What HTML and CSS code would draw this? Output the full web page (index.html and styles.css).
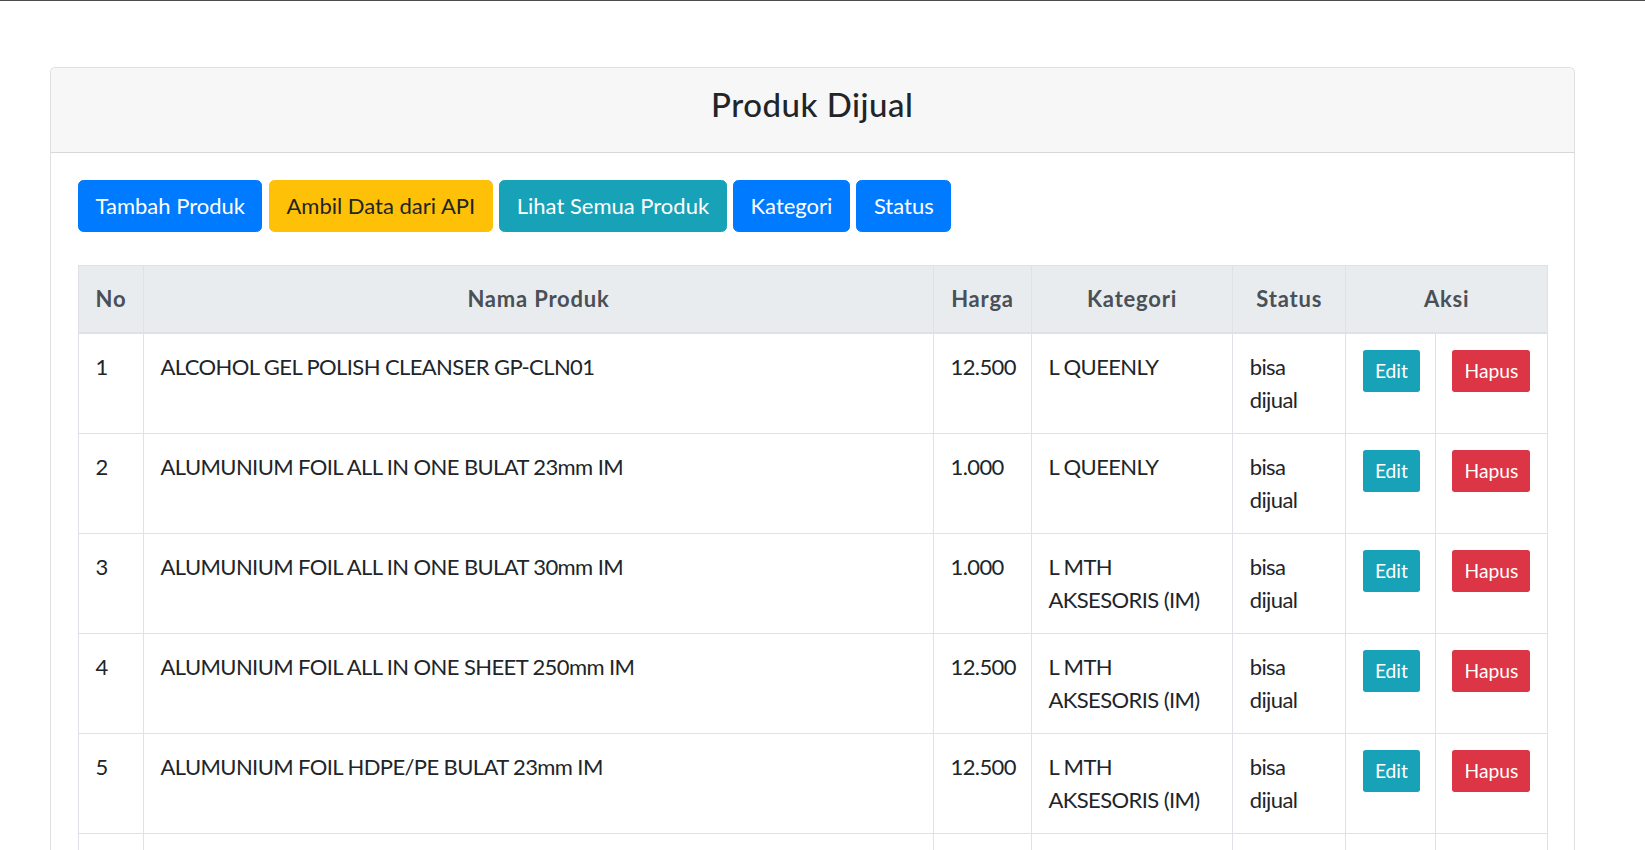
FILE: index.html
```html
<!DOCTYPE html>
<html lang="id">
<head>
<meta charset="utf-8">
<title>Produk Dijual</title>
<link rel="stylesheet" href="styles.css">
</head>
<body>
<div class="topline"></div>
<div class="page">
  <div class="card">
    <div class="card-header">
      <h4 class="title">Produk Dijual</h4>
    </div>
    <div class="card-body">
      <div class="toolbar">
        <a class="btn btn-primary" href="#">Tambah Produk</a>
        <a class="btn btn-warning" href="#">Ambil Data dari API</a>
        <a class="btn btn-info" href="#">Lihat Semua Produk</a>
        <a class="btn btn-primary" href="#">Kategori</a>
        <a class="btn btn-primary" href="#">Status</a>
      </div>
      <table class="table">
        <colgroup>
          <col class="c-no">
          <col class="c-nama">
          <col class="c-harga">
          <col class="c-kat">
          <col class="c-status">
          <col class="c-edit">
          <col class="c-hapus">
        </colgroup>
        <thead>
          <tr>
            <th>No</th>
            <th>Nama Produk</th>
            <th>Harga</th>
            <th>Kategori</th>
            <th>Status</th>
            <th colspan="2">Aksi</th>
          </tr>
        </thead>
        <tbody>
          <tr>
            <td>1</td>
            <td>ALCOHOL GEL POLISH CLEANSER GP-CLN01</td>
            <td>12.500</td>
            <td>L QUEENLY</td>
            <td>bisa dijual</td>
            <td><a class="btn-sm btn-info" href="#">Edit</a></td>
            <td><a class="btn-sm btn-danger" href="#">Hapus</a></td>
          </tr>
          <tr>
            <td>2</td>
            <td>ALUMUNIUM FOIL ALL IN ONE BULAT 23mm IM</td>
            <td>1.000</td>
            <td>L QUEENLY</td>
            <td>bisa dijual</td>
            <td><a class="btn-sm btn-info" href="#">Edit</a></td>
            <td><a class="btn-sm btn-danger" href="#">Hapus</a></td>
          </tr>
          <tr>
            <td>3</td>
            <td>ALUMUNIUM FOIL ALL IN ONE BULAT 30mm IM</td>
            <td>1.000</td>
            <td>L MTH AKSESORIS (IM)</td>
            <td>bisa dijual</td>
            <td><a class="btn-sm btn-info" href="#">Edit</a></td>
            <td><a class="btn-sm btn-danger" href="#">Hapus</a></td>
          </tr>
          <tr>
            <td>4</td>
            <td>ALUMUNIUM FOIL ALL IN ONE SHEET 250mm IM</td>
            <td>12.500</td>
            <td>L MTH AKSESORIS (IM)</td>
            <td>bisa dijual</td>
            <td><a class="btn-sm btn-info" href="#">Edit</a></td>
            <td><a class="btn-sm btn-danger" href="#">Hapus</a></td>
          </tr>
          <tr>
            <td>5</td>
            <td>ALUMUNIUM FOIL HDPE/PE BULAT 23mm IM</td>
            <td>12.500</td>
            <td>L MTH AKSESORIS (IM)</td>
            <td>bisa dijual</td>
            <td><a class="btn-sm btn-info" href="#">Edit</a></td>
            <td><a class="btn-sm btn-danger" href="#">Hapus</a></td>
          </tr>
          <tr>
            <td>6</td>
            <td>ALUMUNIUM FOIL HDPE/PE BULAT 30mm IM</td>
            <td>12.500</td>
            <td>L MTH AKSESORIS (IM)</td>
            <td>bisa dijual</td>
            <td><a class="btn-sm btn-info" href="#">Edit</a></td>
            <td><a class="btn-sm btn-danger" href="#">Hapus</a></td>
          </tr>
        </tbody>
      </table>
    </div>
  </div>
</div>
</body>
</html>
```

FILE: styles.css
```css
* {
  box-sizing: border-box;
}

html, body {
  margin: 0;
  padding: 0;
  background: #ffffff;
}

body {
  font-family: Lato, "Liberation Sans", Arial, sans-serif;
  font-size: 22px;
  line-height: 1.5;
  color: #212529;
}

.topline {
  height: 1px;
  background: #4d4d4d;
}

.page {
  padding: 66px 0 0 49.5px;
}

.card {
  width: 1525.5px;
  border: 1px solid rgba(0, 0, 0, 0.125);
  border-radius: 5.5px;
  background: #ffffff;
}

.card-header {
  padding: 16.5px 27.5px;
  background: #f7f7f7;
  border-bottom: 1px solid rgba(0, 0, 0, 0.125);
  border-radius: 5.5px 5.5px 0 0;
}

.title {
  margin: 0 0 11px;
  font-size: 33px;
  line-height: 1.2;
  font-weight: 500;
  letter-spacing: 0.5px;
  text-align: center;
  color: #212529;
}

.card-body {
  padding: 27.5px;
}

.toolbar {
  display: flex;
  gap: 6.5px;
  margin-bottom: 33px;
}

.btn {
  display: inline-block;
  padding: 8.25px 16.5px;
  font-size: 22px;
  line-height: 1.5;
  border: 1px solid transparent;
  border-radius: 5.5px;
  text-decoration: none;
  color: #ffffff;
}

.btn-primary {
  background: #007bff;
  border-color: #007bff;
}

.btn-warning {
  background: #ffc107;
  border-color: #ffc107;
  color: #212529;
}

.btn-info {
  background: #17a2b8;
  border-color: #17a2b8;
  color: #ffffff;
}

.btn-danger {
  background: #dc3545;
  border-color: #dc3545;
  color: #ffffff;
}

.btn-sm {
  display: inline-block;
  vertical-align: top;
  padding: 5.5px 11px;
  font-size: 19.25px;
  line-height: 1.5;
  letter-spacing: 0;
  border: 1px solid transparent;
  border-radius: 2.75px;
  text-decoration: none;
}

.table {
  width: 100%;
  table-layout: fixed;
  border-collapse: collapse;
  color: #212529;
}

.c-no { width: 65px; }
.c-nama { width: 790px; }
.c-harga { width: 98px; }
.c-kat { width: 201.2px; }
.c-status { width: 113.2px; }
.c-edit { width: 89.6px; }
.c-hapus { width: 112px; }

.table th,
.table td {
  padding: 16.5px;
  border: 1px solid #dee2e6;
  vertical-align: top;
  text-align: left;
  line-height: 33px;
}

.table td {
  letter-spacing: -0.6px;
}

.table thead th {
  background: #e9ecef;
  color: #495057;
  font-weight: 700;
  letter-spacing: 0.8px;
  text-align: center;
  border-bottom: 2px solid #dee2e6;
}
```
